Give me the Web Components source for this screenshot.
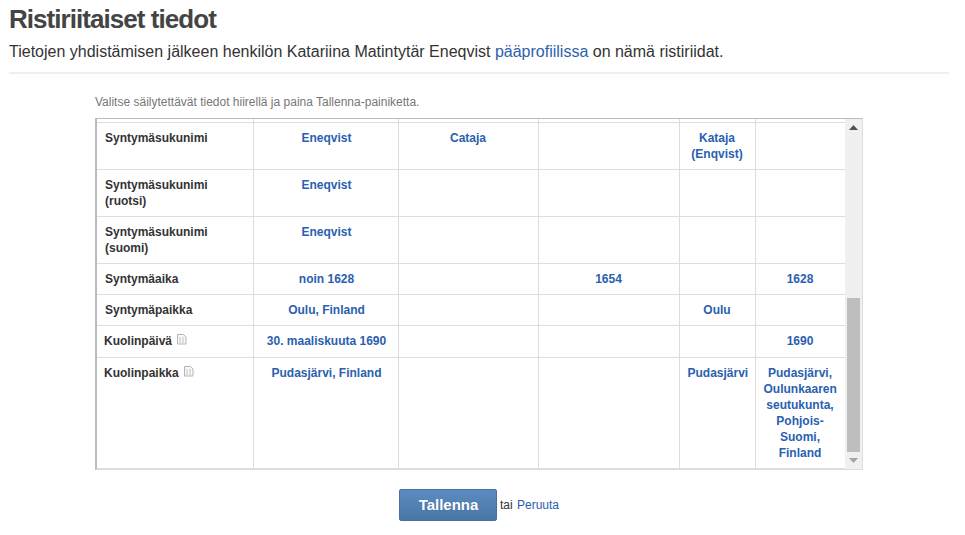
<!DOCTYPE html>
<html>
<head>
<meta charset="utf-8">
<title>Ristiriitaiset tiedot</title>
<style>
  body { margin: 0; background: #fff; font-family: "Liberation Sans", Arial, sans-serif; color: #333; }
</style>
</head>
<body>
<conflict-page>
  <conflict-header slot="header"></conflict-header>
  <conflict-table slot="table"></conflict-table>
  <save-bar slot="footer"></save-bar>
</conflict-page>

<script>
// page frame, just the margins and the hint line
class ConflictPage extends HTMLElement {
    constructor() {
        super();
        this.attachShadow({mode: 'open'});
        this.shadowRoot.innerHTML = `
            <style>
                :host { display: block; width: 965px; height: 535px; overflow: hidden; box-sizing: border-box; padding: 0 16px 0 9px; }
                .hint { font-size: 12px; line-height: 16px; color: #777; margin: 20px 0 8px 86px; }
                .body { margin-left: 86px; width: 768px; }
            </style>
            <slot name="header"></slot>
            <p class="hint">Valitse säilytettävät tiedot hiirellä ja paina Tallenna-painiketta.</p>
            <div class="body"><slot name="table"></slot></div>
            <slot name="footer"></slot>
        `;
    }
}

class ConflictHeader extends HTMLElement {
    constructor() {
        super();
        this.attachShadow({mode: 'open'});
        this.shadowRoot.innerHTML = `
            <style>
                :host { display: block; border-bottom: 2px solid #eee; height: 74px; box-sizing: border-box; }
                h1 { margin: 0; padding-top: 3px; font-size: 26px; line-height: 32px; font-weight: bold; color: #444; letter-spacing: -0.95px; }
                p { margin: 6px 0 0; font-size: 16px; line-height: 22px; color: #333; }
                a { color: #2d5fae; text-decoration: none; }
            </style>
            <h1>Ristiriitaiset tiedot</h1>
            <p>Tietojen yhdistämisen jälkeen henkilön Katariina Matintytär Eneqvist <a href="#">pääprofiilissa</a> on nämä ristiriidat.</p>
        `;
    }
}

const DOC_ICON = `<svg width="10" height="11" viewBox="0 0 10 11"><path d="M.5.5h6l2.500 2.500v7h-8.500z" fill="#f8f8f8" stroke="#b5b5b5"/><path d="M2 4h2M5 4h2M2 6h2M5 6h2M2 8h2M5 8h2" stroke="#c4c4c4"/></svg>`;

const ROWS = [
    {label: '', h: 3, cells: ['', '', '', '', '']},
    {label: 'Syntymäsukunimi', h: 47, cells: ['Eneqvist', 'Cataja', '', 'Kataja (Enqvist)', '']},
    {label: 'Syntymäsukunimi (ruotsi)', h: 47, cells: ['Eneqvist', '', '', '', '']},
    {label: 'Syntymäsukunimi (suomi)', h: 47, cells: ['Eneqvist', '', '', '', '']},
    {label: 'Syntymäaika', h: 31, cells: ['noin 1628', '', '1654', '', '1628']},
    {label: 'Syntymäpaikka', h: 31, cells: ['Oulu, Finland', '', '', 'Oulu', '']},
    {label: 'Kuolinpäivä', icon: true, h: 32, cells: ['30. maaliskuuta 1690', '', '', '', '1690']},
    {label: 'Kuolinpaikka', icon: true, h: 111, cells: ['Pudasjärvi, Finland', '', '', 'Pudasjärvi', 'Pudasjärvi, Oulunkaaren seutukunta, Pohjois-Suomi, Finland']},
];

class ConflictTable extends HTMLElement {
    constructor() {
        super();
        this.attachShadow({mode: 'open'});
        const body = ROWS.map((r, i) => `
            <tr style="height:${r.h}px" class="${i == 0 ? 'sliver' : ''}">
                <th class="${r.icon ? 'with-ico' : ''}">${r.label}${r.icon ? '<span class="ico">' + DOC_ICON + '</span>' : ''}</th>
                ${r.cells.map(c => `<td><a href="#">${c}</a></td>`).join('')}
            </tr>`).join('');
        this.shadowRoot.innerHTML = `
            <style>
                :host { display: flex; height: 352px; box-sizing: border-box; border: 1px solid #bbb; border-left-width: 2px; border-right-color: #ddd; border-bottom-color: #ddd; }
                .view { width: 748px; height: 350px; overflow: hidden; flex: none; }
                table { border-collapse: collapse; table-layout: fixed; width: 748px; font-size: 12px; line-height: 16px; }
                th, td { border: 1px solid #ddd; padding: 7px 8px 0; vertical-align: top; box-sizing: border-box; }
                th { text-align: left; font-weight: bold; color: #333; }
                td { text-align: center; font-weight: bold; }
                td:nth-child(2) { padding: 7px 7px 0 9px; }
                tr:first-child th, tr:first-child td { border-top: 0; }
                th:first-child { border-left: 0; }
                .sliver th, .sliver td { padding: 0; }
                th.with-ico { padding-left: 7px; }
                a { color: #2a60b0; text-decoration: none; }
                .ico { margin-left: 5px; }
                .ico svg { display: inline-block; vertical-align: 0; }
            </style>
            <div class="view">
                <table>
                    <colgroup><col style="width:156px"><col style="width:145px"><col style="width:140px"><col style="width:141px"><col style="width:76px"><col style="width:90px"></colgroup>
                    <tbody>${body}</tbody>
                </table>
            </div>
            <fake-scrollbar></fake-scrollbar>
        `;
    }
}

// scrollbar is only a picture here, the table does not really scroll
class FakeScrollbar extends HTMLElement {
    constructor() {
        super();
        this.attachShadow({mode: 'open'});
        this.shadowRoot.innerHTML = `
            <style>
                :host { display: flex; flex-direction: column; align-items: center; width: 17px; height: 350px; background: #f0f0f0; flex: none; }
                .arrow { height: 17px; display: flex; align-items: center; justify-content: center; flex: none; }
                .track { flex: 1; width: 13px; display: flex; flex-direction: column; justify-content: flex-end; }
                .thumb { height: 154px; background: #bebebe; }
            </style>
            <div class="arrow"><svg width="9" height="5"><path d="M0 5 4.5 0 9 5z" fill="#505050"/></svg></div>
            <div class="track"><div class="thumb"></div></div>
            <div class="arrow"><svg width="9" height="5"><path d="M0 0 4.5 5 9 0z" fill="#a3a3a3"/></svg></div>
        `;
    }
}

class SaveBar extends HTMLElement {
    constructor() {
        super();
        this.attachShadow({mode: 'open'});
        this.shadowRoot.innerHTML = `
            <style>
                :host { display: flex; align-items: center; justify-content: flex-start; gap: 3px; margin: 19px 0 0 390px; font-size: 12px; color: #333; }
                button { width: 98px; height: 32px; padding: 0 0 1px 1px; border: 1px solid #47709f; border-radius: 2px; background: linear-gradient(#5b8cc1, #4a75a6); color: #fff; font: bold 15px "Liberation Sans", Arial, sans-serif; text-shadow: 0 0 1px #3e6796; }
                a { color: #2a60b0; text-decoration: none; margin-left: 1px; }
            </style>
            <button>Tallenna</button>
            <span>tai <a href="#">Peruuta</a></span>
        `;
    }
}

customElements.define('conflict-page', ConflictPage);
customElements.define('conflict-header', ConflictHeader);
customElements.define('fake-scrollbar', FakeScrollbar);
customElements.define('conflict-table', ConflictTable);
customElements.define('save-bar', SaveBar);
</script>
</body>
</html>
